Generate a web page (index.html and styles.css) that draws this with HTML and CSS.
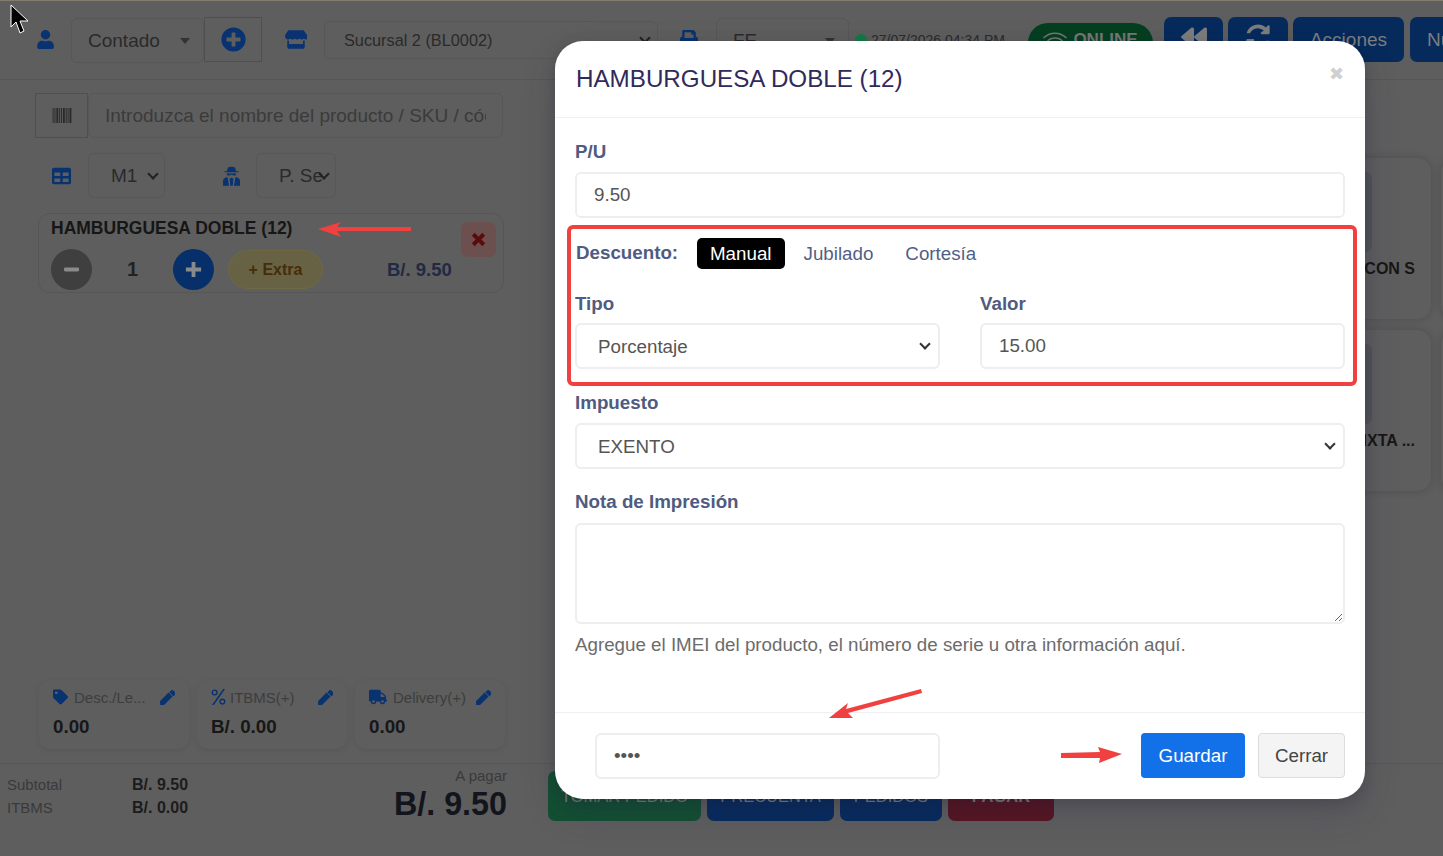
FILE: index.html
```html
<!DOCTYPE html>
<html lang="en">
<head>
    <meta charset="UTF-8">
    <meta name="viewport" content="width=device-width, initial-scale=1.0">
    <title>POS</title>
    <link rel="stylesheet" href="styles.css">
</head>
<body>

<div class="pos">
    <header class="topbar">
        <svg class="ico ico-user" viewBox="0 0 448 512"><path d="M224 256a128 128 0 1 0 0-256 128 128 0 0 0 0 256zm90 32h-17a174 174 0 0 1-146 0h-17A134 134 0 0 0 0 422v42a48 48 0 0 0 48 48h352a48 48 0 0 0 48-48v-42a134 134 0 0 0-134-134z"/></svg>
        <div class="sel sel-contado">Contado<span class="caret"></span></div>
        <div class="addbtn"><svg viewBox="0 0 512 512"><path d="M256 8a248 248 0 1 0 0 496 248 248 0 0 0 0-496zm144 276a12 12 0 0 1-12 12h-92v92a12 12 0 0 1-12 12h-56a12 12 0 0 1-12-12v-92h-92a12 12 0 0 1-12-12v-56a12 12 0 0 1 12-12h92v-92a12 12 0 0 1 12-12h56a12 12 0 0 1 12 12v92h92a12 12 0 0 1 12 12z"/></svg></div>
        <svg class="ico ico-store" viewBox="0 0 616 512"><path d="M602 118 538 16a32 32 0 0 0-27-16H105a32 32 0 0 0-27 16L14 118c-33 53-4 127 58 135a86 86 0 0 0 76-27 86 86 0 0 0 128 0 86 86 0 0 0 64 29 86 86 0 0 0 64-29 86 86 0 0 0 128 0 86 86 0 0 0 76 27c62-8 91-82 58-135zM530 288a118 118 0 0 1-26-4v100H112V284a118 118 0 0 1-26 4 120 120 0 0 1-22-2v178a48 48 0 0 0 48 48h392a48 48 0 0 0 48-48V286a120 120 0 0 1-22 2z"/></svg>
        <div class="sel sel-sucursal">Sucursal 2 (BL0002)<span class="chev"></span></div>
        <svg class="ico ico-print" viewBox="0 0 512 512"><path d="M448 192V77a32 32 0 0 0-9-22L393 9a32 32 0 0 0-23-9H96a32 32 0 0 0-32 32v160a64 64 0 0 0-64 64v112a16 16 0 0 0 16 16h48v96a32 32 0 0 0 32 32h320a32 32 0 0 0 32-32v-96h48a16 16 0 0 0 16-16V256a64 64 0 0 0-64-64zM384 448H128v-96h256zm0-224H128V64h192v48a16 16 0 0 0 16 16h48z"/></svg>
        <div class="sel sel-fe">FE<span class="caret"></span></div>
        <div class="clock"><span class="clock-dot"></span>27/07/2026 04:34 PM</div>
        <div class="online">
            <svg viewBox="0 0 640 512"><path d="M320 96C206 96 102 142 26 216l-26-28C84 106 197 56 320 56s236 50 320 132l-26 28C538 142 434 96 320 96zm0 128c-71 0-135 28-183 74l-28-28c55-54 130-86 211-86s156 32 211 86l-28 28c-48-46-112-74-183-74z"/></svg>
            ONLINE
        </div>
        <button class="navbtn nav-back"><svg viewBox="0 0 512 512"><path d="M11 276l192 160c21 17 53 3 53-25V101c0-28-32-42-53-25L11 236a26 26 0 0 0 0 40zm256 0l192 160c21 17 53 3 53-25V101c0-28-32-42-53-25L267 236a26 26 0 0 0 0 40z"/></svg></button>
        <button class="navbtn nav-sync"><svg viewBox="0 0 512 512"><path d="M370 133a168 168 0 0 0-270 47H33C56 79 147 8 256 8c60 0 114 23 155 60l34-34c15-15 41-4 41 17v127a24 24 0 0 1-24 24H335c-21 0-32-26-17-41zM33 296h127c21 0 32 26 17 41l-35 42a168 168 0 0 0 270-47h67c-23 101-114 172-223 172-60 0-114-23-155-60l-34 34c-15 15-41 4-41-17V320a24 24 0 0 1 24-24z"/></svg></button>
        <button class="navbtn nav-acciones">Acciones</button>
        <button class="navbtn nav-nuevo">Nuevo</button>
    </header>

    <div class="main">
        <section class="orderside">
            <div class="search-row">
                <div class="barcode">
                    <svg viewBox="0 0 20 16"><path d="M0 0h1v16H0zM2 0h1v16H2zM4 0h2v16H4zM7 0h1v16H7zM9 0h1v16H9zM11 0h2v16h-2zM14 0h1v16h-1zM16 0h1v16h-1zM18 0h2v16h-2z"/></svg>
                </div>
                <div class="search-input"><span>Introduzca el nombre del producto / SKU / código</span></div>
            </div>

            <div class="mesa-row">
                <svg class="ico ico-table" viewBox="0 0 512 512"><path d="M464 32H48A48 48 0 0 0 0 80v352a48 48 0 0 0 48 48h416a48 48 0 0 0 48-48V80a48 48 0 0 0-48-48zM224 416H64v-96h160zm0-160H64v-96h160zm224 160H288v-96h160zm0-160H288v-96h160z"/></svg>
                <div class="sel sel-mesa">M1<span class="chev"></span></div>
                <svg class="ico ico-spy" viewBox="0 0 448 512"><path d="M130 30Q224-10 318 30L345 130H410V160H38V130H103Z"/><path d="M100 190H348V215Q348 245 300 245 260 245 250 220H198Q188 245 148 245 100 245 100 215Z"/><path d="M0 512V400Q0 320 90 290H120L160 512ZM448 512V400Q448 320 358 290H328L288 512ZM190 512 175 320 224 300 273 320 258 512Z"/></svg>
                <div class="sel sel-servicio"><span class="sel-clip">P. Servicio</span><span class="chev"></span></div>
            </div>

            <div class="item-card">
                <div class="item-name">HAMBURGUESA DOBLE (12)</div>
                <div class="item-row">
                    <span class="round round-minus"><svg viewBox="0 0 20 20"><rect x="2" y="8" width="16" height="4" rx="1.5"/></svg></span>
                    <span class="qty">1</span>
                    <span class="round round-plus"><svg viewBox="0 0 20 20"><path d="M8 2h4v6h6v4h-6v6H8v-6H2V8h6z"/></svg></span>
                    <span class="extra">+ Extra</span>
                    <span class="item-price">B/. 9.50</span>
                </div>
                <span class="item-del"><svg viewBox="0 0 20 20"><path d="M3 6l3-3 4 4 4-4 3 3-4 4 4 4-3 3-4-4-4 4-3-3 4-4z"/></svg></span>
            </div>

            <div class="stats">
                <div class="stat">
                    <div class="stat-top">
                        <svg class="stat-ico" viewBox="0 0 512 512"><path d="M0 252V48A48 48 0 0 1 48 0h204a48 48 0 0 1 34 14l212 212a48 48 0 0 1 0 68L294 498a48 48 0 0 1-68 0L14 286a48 48 0 0 1-14-34zm112-188a48 48 0 1 0 0 96 48 48 0 0 0 0-96z"/></svg>
                        <span class="stat-label">Desc./Le...</span>
                        <svg class="stat-edit" viewBox="0 0 512 512"><path d="M291 83l138 138L130 520 7 512 0 388zM497 62L450 15a48 48 0 0 0-68 0l-64 64 138 138 41-41 23-23a48 48 0 0 0-23-91z"/></svg>
                    </div>
                    <div class="stat-val">0.00</div>
                </div>
                <div class="stat">
                    <div class="stat-top">
                        <svg class="stat-ico stat-ico-pct" viewBox="0 0 448 512"><circle cx="100" cy="110" r="76"/><circle cx="348" cy="402" r="76"/><path d="M372 0h62L76 512H14z"/></svg>
                        <span class="stat-label">ITBMS(+)</span>
                        <svg class="stat-edit" viewBox="0 0 512 512"><path d="M291 83l138 138L130 520 7 512 0 388zM497 62L450 15a48 48 0 0 0-68 0l-64 64 138 138 41-41 23-23a48 48 0 0 0-23-91z"/></svg>
                    </div>
                    <div class="stat-val">B/. 0.00</div>
                </div>
                <div class="stat">
                    <div class="stat-top">
                        <svg class="stat-ico stat-ico-wide" viewBox="0 0 640 512"><path d="M624 352h-16V244a48 48 0 0 0-14-34L494 110a48 48 0 0 0-34-14h-44V48a48 48 0 0 0-48-48H48A48 48 0 0 0 0 48v320a48 48 0 0 0 48 48h16a96 96 0 0 0 192 0h128a96 96 0 0 0 192 0h48a16 16 0 0 0 16-16v-32a16 16 0 0 0-16-16zM160 464a48 48 0 1 1 0-96 48 48 0 0 1 0 96zm320 0a48 48 0 1 1 0-96 48 48 0 0 1 0 96zm80-208H416V144h44l100 100z"/></svg>
                        <span class="stat-label">Delivery(+)</span>
                        <svg class="stat-edit" viewBox="0 0 512 512"><path d="M291 83l138 138L130 520 7 512 0 388zM497 62L450 15a48 48 0 0 0-68 0l-64 64 138 138 41-41 23-23a48 48 0 0 0-23-91z"/></svg>
                    </div>
                    <div class="stat-val">0.00</div>
                </div>
            </div>
        </section>

        <section class="products">
            <div class="product"><div class="thumb"></div><div class="product-name">HAMBURGUESA BACON S</div></div>
            <div class="product"><div class="thumb"></div><div class="product-name">HAMBURGUESA BACON S</div></div>
            <div class="product"><div class="thumb"></div><div class="product-name">HAMBURGUESA MIXTA ...</div></div>
            <div class="product"><div class="thumb"></div><div class="product-name">HAMBURGUESA MIXTA ...</div></div>
        </section>
    </div>

    <footer class="bottombar">
        <div class="totals">
            <div class="totals-row"><span class="totals-label">Subtotal</span><b>B/. 9.50</b></div>
            <div class="totals-row"><span class="totals-label">ITBMS</span><b>B/. 0.00</b></div>
        </div>
        <div class="apagar">
            <div class="apagar-label">A pagar</div>
            <div class="apagar-val">B/. 9.50</div>
        </div>
        <div class="actions">
            <button class="act act-green">TOMAR PEDIDO</button>
            <button class="act act-blue act-pre">PRECUENTA</button>
            <button class="act act-blue act-ped">PEDIDOS</button>
            <button class="act act-red">PAGAR</button>
        </div>
    </footer>
</div>

<div class="modal">
    <div class="modal-header">
        <h2>HAMBURGUESA DOBLE (12)</h2>
        <span class="modal-close">&#10006;</span>
    </div>
    <div class="modal-body">
        <label class="lbl lbl-pu">P/U</label>
        <input class="field" type="text" value="9.50">

        <div class="desc-row">
            <span class="lbl">Descuento:</span>
            <a class="pill active" href="#">Manual</a>
            <a class="pill" href="#">Jubilado</a>
            <a class="pill" href="#">Cortesía</a>
        </div>

        <div class="two-col">
            <div>
                <label class="lbl">Tipo</label>
                <div class="field field-sel">Porcentaje<span class="chev"></span></div>
            </div>
            <div>
                <label class="lbl">Valor</label>
                <input class="field" type="text" value="15.00">
            </div>
        </div>

        <label class="lbl lbl-imp">Impuesto</label>
        <div class="field field-sel">EXENTO<span class="chev"></span></div>

        <label class="lbl lbl-nota">Nota de Impresión</label>
        <textarea class="field field-area"></textarea>
        <p class="help">Agregue el IMEI del producto, el número de serie u otra información aquí.</p>
    </div>
    <div class="modal-footer">
        <input class="field pin" type="password" value="1234">
        <button class="btn-save">Guardar</button>
        <button class="btn-close">Cerrar</button>
    </div>
</div>

<!-- annotations drawn on top of the screenshot -->
<svg class="marks" viewBox="0 0 1443 856">
    <rect class="mark-box" x="569" y="227" width="786" height="157" rx="4"/>
    <polygon class="mark" points="318,229 341,222 337,227 411,227 411,231 337,231 341,237"/>
    <polygon class="mark" points="829,718 848,703 846,709 921,689 922,693 848,713 853,718"/>
    <polygon class="mark" points="1122,754 1098,747 1100,752 1061,753 1061,758 1100,758 1099,763"/>
    <path class="cursor" d="M11 5V27L16 22 20 33 24 31 20 21H28Z"/>
</svg>

</body>
</html>
```

FILE: styles.css
```css
* {
    box-sizing: border-box;
}

body {
    margin: 0;
    height: 856px;
    overflow: hidden;
    background-color: #5e5e5e;
    font-family: 'Liberation Sans', Arial, sans-serif;
    color: #1c1c1c;
}

.pos {
    height: 856px;
    display: flex;
    flex-direction: column;
    border-top: 1px solid #857c70;
}

/* top bar */
.topbar {
    height: 79px;
    flex: none;
    display: flex;
    align-items: flex-start;
    padding: 16px 0 0 37px;
    border-bottom: 1px solid #575757;
    overflow: hidden;
}

.ico {
    flex: none;
    fill: #083270;
}

.ico-user {
    width: 17px;
    height: 19px;
    margin-top: 13px;
}

.ico-store {
    width: 22px;
    height: 19px;
    margin: 13px 0 0 23px;
}

.ico-print {
    width: 18px;
    height: 20px;
    margin: 12px 0 0 22px;
}

.sel {
    position: relative;
    flex: none;
    display: flex;
    align-items: center;
    border: 1px solid #575757;
    border-radius: 6px;
    font-size: 19px;
    color: #2a2a2a;
}

.caret {
    position: absolute;
    top: 50%;
    right: 13px;
    margin-top: -3px;
    border-left: 5px solid transparent;
    border-right: 5px solid transparent;
    border-top: 6px solid #333;
}

.chev {
    position: absolute;
    top: 50%;
    right: 8px;
    width: 8px;
    height: 8px;
    margin-top: -6px;
    border-right: 2px solid #222;
    border-bottom: 2px solid #222;
    transform: rotate(45deg);
}

.sel-contado {
    width: 133px;
    height: 45px;
    margin: 1px 0 0 17px;
    padding-left: 16px;
}

.addbtn {
    flex: none;
    width: 58px;
    height: 45px;
    display: flex;
    align-items: center;
    justify-content: center;
    border: 1px solid #4f4f4f;
}

.addbtn svg {
    width: 25px;
    height: 25px;
    fill: #083270;
}

.sel-sucursal {
    width: 334px;
    height: 38px;
    margin: 4px 0 0 17px;
    padding-left: 19px;
    font-size: 16.3px;
}

.sel-fe {
    width: 133px;
    height: 45px;
    margin: 1px 0 0 18px;
    padding-left: 16px;
}

.clock {
    flex: none;
    width: 173px;
    margin: 15px 0 0 6px;
    display: flex;
    align-items: center;
    gap: 4px;
    font-size: 14px;
    color: #2a2a2a;
}

.clock-dot {
    width: 12px;
    height: 12px;
    border-radius: 50%;
    background: #127a43;
}

.online {
    flex: none;
    width: 125px;
    height: 40px;
    margin-top: 6px;
    padding-top: 7px;
    display: flex;
    align-items: flex-start;
    justify-content: center;
    gap: 6px;
    border-radius: 20px;
    background: #053f20;
    color: #777;
    font-size: 17px;
    font-weight: bold;
}

.online svg {
    width: 24px;
    height: 20px;
    fill: #777;
}

.navbtn {
    flex: none;
    height: 45px;
    padding: 0;
    border: none;
    border-radius: 7px;
    background: #062a5c;
    color: #7d7d7d;
    font-family: inherit;
    font-size: 19px;
}

.navbtn svg {
    width: 26px;
    height: 26px;
    fill: #7d7d7d;
}

.nav-back { width: 59px; margin-left: 11px; }
.nav-sync { width: 60px; margin-left: 5px; }
.nav-acciones { width: 111px; margin-left: 5px; }
.nav-nuevo { width: 70px; margin-left: 6px; text-align: left; padding-left: 17px; }

/* order column */
.main {
    flex: 1;
    min-height: 0;
    display: flex;
}

.orderside {
    flex: none;
    width: 1200px;
    display: flex;
    flex-direction: column;
    padding-top: 13px;
}

.search-row {
    display: flex;
    height: 45px;
    margin-left: 35px;
}

.barcode {
    width: 53px;
    display: flex;
    align-items: center;
    justify-content: center;
    border: 1px solid #4f4f4f;
}

.barcode svg {
    width: 20px;
    height: 15px;
    fill: #2a2a2a;
}

.search-input {
    width: 415px;
    display: flex;
    align-items: center;
    padding: 0 16px;
    border: 1px solid #575757;
    border-radius: 6px;
    font-size: 19px;
    color: #3b3b3b;
}

.search-input span {
    white-space: nowrap;
    overflow: hidden;
}

.mesa-row {
    display: flex;
    align-items: center;
    height: 45px;
    margin: 15px 0 0 52px;
}

.ico-table {
    width: 19px;
    height: 20px;
}

.ico-spy {
    width: 17px;
    height: 20px;
    margin-left: 58px;
}

.sel-mesa {
    width: 77px;
    height: 45px;
    margin-left: 17px;
    padding-left: 22px;
}

.sel-servicio {
    width: 80px;
    height: 45px;
    margin-left: 16px;
    padding-left: 22px;
}

.sel-clip {
    width: 44px;
    white-space: nowrap;
    overflow: hidden;
}

.sel-mesa .chev,
.sel-servicio .chev {
    right: 7px;
}

.item-card {
    position: relative;
    width: 466px;
    height: 80px;
    margin: 15px 0 0 38px;
    padding: 4px 0 0 12px;
    border: 1px solid #565656;
    border-radius: 12px;
}

.item-name {
    font-size: 17.5px;
    font-weight: bold;
    line-height: 21px;
    color: #161616;
}

.item-row {
    display: flex;
    align-items: center;
    margin-top: 10px;
}

.round {
    flex: none;
    width: 41px;
    height: 41px;
    display: flex;
    align-items: center;
    justify-content: center;
    border-radius: 50%;
}

.round svg {
    width: 19px;
    height: 19px;
    fill: #8a8a8a;
}

.round-minus { background: #3f3f3f; }
.round-plus { background: #07306a; }

.qty {
    width: 81px;
    text-align: center;
    font-size: 20px;
    font-weight: bold;
    color: #222;
}

.extra {
    flex: none;
    width: 95px;
    height: 39px;
    margin-left: 14px;
    display: flex;
    align-items: center;
    justify-content: center;
    border: 1px solid #6f6845;
    border-radius: 20px;
    background: #686245;
    color: #452d09;
    font-size: 16px;
    font-weight: bold;
}

.item-price {
    margin-left: 64px;
    font-size: 18.5px;
    font-weight: bold;
    color: #1f2a44;
}

.item-del {
    position: absolute;
    top: 8px;
    right: 7px;
    width: 35px;
    height: 35px;
    display: flex;
    align-items: center;
    justify-content: center;
    border-radius: 7px;
    background: #6c4f4f;
}

.item-del svg {
    width: 19px;
    height: 19px;
    fill: #5d0a0a;
}

.stats {
    display: flex;
    gap: 8px;
    margin: auto 0 14px 39px;
}

.stat {
    width: 150px;
    height: 69px;
    padding: 7px 14px;
    border-radius: 12px;
    background: #5e5e5e;
    box-shadow: 0 2px 6px rgba(0, 0, 0, 0.07);
}

.stat-top {
    display: flex;
    align-items: center;
    gap: 6px;
    height: 20px;
}

.stat-ico {
    flex: none;
    width: 15px;
    height: 16px;
    fill: #083270;
}

.stat-ico-pct {
    overflow: visible;
    margin-right: -2px;
}

.stat-ico-pct circle {
    fill: none;
    stroke: #083270;
    stroke-width: 44;
}

.stat-ico-wide {
    width: 18px;
}

.stat-label {
    flex: 1;
    font-size: 15px;
    color: #3d3d3d;
    white-space: nowrap;
}

.stat-edit {
    flex: none;
    width: 15px;
    height: 15px;
    fill: #083270;
    overflow: hidden;
}

.stat-val {
    margin-top: 9px;
    font-size: 18.75px;
    font-weight: bold;
    color: #171717;
}

/* products */
.products {
    flex: none;
    display: grid;
    grid-template-columns: 231px 231px;
    grid-auto-rows: 161px;
    gap: 11px 10px;
    padding-top: 78px;
}

.product {
    padding-top: 14px;
    border-radius: 14px;
    background: #5e5e5e;
    box-shadow: 0 0 8px rgba(0, 0, 0, 0.18);
}

.thumb {
    width: 114px;
    height: 80px;
    margin-left: 58px;
    border-radius: 6px;
    background: #515458;
}

.product-name {
    margin-top: 8px;
    padding-right: 16px;
    text-align: right;
    font-size: 16px;
    font-weight: bold;
    color: #161616;
    white-space: nowrap;
}

/* footer */
.bottombar {
    flex: none;
    height: 93px;
    display: flex;
    border-top: 1px solid #575757;
}

.totals {
    width: 200px;
    padding: 9px 0 0 7px;
}

.totals-row {
    display: flex;
    height: 23px;
    align-items: center;
    font-size: 16px;
}

.totals-label {
    width: 125px;
    font-size: 15px;
    color: #3a3a3a;
}

.apagar {
    width: 307px;
    padding-top: 3px;
    text-align: right;
}

.apagar-label {
    font-size: 15px;
    color: #3a3a3a;
}

.apagar-val {
    margin-top: 2px;
    font-size: 32.3px;
    font-weight: bold;
    color: #12151c;
}

.actions {
    display: flex;
    gap: 6px;
    height: 50px;
    margin: 7px 0 0 41px;
}

.act {
    height: 50px;
    padding: 0;
    border: none;
    border-radius: 7px;
    color: #7d7d7d;
    font-family: inherit;
    font-size: 16.5px;
}

.act-green { width: 153px; background: #124f31; }
.act-blue { background: #062a5c; }
.act-pre { width: 127px; }
.act-ped { width: 102px; }
.act-red { width: 106px; background: #56141f; font-weight: bold; }

/* modal */
.modal {
    position: absolute;
    top: 41px;
    left: 555px;
    width: 810px;
    height: 758px;
    display: flex;
    flex-direction: column;
    border-radius: 28px;
    background: #fff;
    box-shadow: 0 15px 35px rgba(50, 50, 93, 0.2), 0 5px 15px rgba(0, 0, 0, 0.17);
}

.modal-header {
    position: relative;
    height: 77px;
    flex: none;
    padding: 23px 20px 0 21px;
    border-bottom: 1px solid #f0f0f0;
}

.modal-header h2 {
    margin: 0;
    font-size: 24.2px;
    font-weight: normal;
    line-height: 30px;
    color: #2f2a59;
}

.modal-close {
    position: absolute;
    top: 22px;
    right: 21px;
    font-size: 18px;
    color: #d0d0d0;
}

.modal-body {
    flex: 1;
    padding: 0 20px;
}

.lbl {
    display: block;
    font-size: 18.75px;
    font-weight: bold;
    line-height: 22px;
    color: #4f5b80;
}

.lbl-pu { margin-top: 23px; }
.lbl-imp { margin-top: 23px; }
.lbl-nota { margin-top: 22px; }

.field {
    display: block;
    width: 100%;
    height: 46px;
    padding: 0 17px;
    border: 2px solid #eeeeee;
    border-radius: 6px;
    background: #fff;
    font-family: inherit;
    font-size: 18.75px;
    color: #555;
    outline: none;
}

.lbl-pu + .field,
.lbl-imp + .field {
    margin-top: 9px;
}

.two-col .lbl + .field {
    margin-top: 8px;
}

.lbl-nota + .field {
    margin-top: 10px;
}

.field-sel {
    position: relative;
    display: flex;
    align-items: center;
    padding: 2px 0 0 21px;
}

.field-sel .chev {
    right: 9px;
    width: 8px;
    height: 8px;
    border-color: #333;
}

.field-area {
    height: 101px;
    padding: 8px 17px;
    resize: vertical;
}

.desc-row {
    display: flex;
    align-items: center;
    height: 31px;
    margin-top: 20px;
}

.desc-row .lbl {
    width: 122px;
    padding: 0 0 2px 1px;
}

.pill {
    height: 31px;
    display: flex;
    align-items: center;
    padding: 0 13px;
    margin-right: 6px;
    border-radius: 5px;
    font-size: 18.75px;
    color: #525f85;
    text-decoration: none;
}

.pill.active {
    background: #000;
    color: #fff;
}

.two-col {
    display: grid;
    grid-template-columns: 365px 365px;
    gap: 40px;
    margin-top: 24px;
}

.help {
    margin: 10px 0 0;
    font-size: 18.75px;
    color: #6c6c6c;
}

.modal-footer {
    flex: none;
    height: 87px;
    display: flex;
    align-items: flex-start;
    padding: 20px 20px 0 40px;
    border-top: 1px solid #f0f0f0;
}

.pin {
    width: 345px;
}

.btn-save,
.btn-close {
    height: 45px;
    padding: 0;
    border-radius: 4px;
    font-family: inherit;
    font-size: 18.75px;
}

.btn-save {
    width: 104px;
    margin-left: 201px;
    border: none;
    background: #1271e8;
    color: #fff;
}

.btn-close {
    width: 87px;
    margin-left: 13px;
    border: 1px solid #dcdcdc;
    background: #f4f4f4;
    color: #444;
}

/* screenshot annotations */
.marks {
    position: absolute;
    top: 0;
    left: 0;
    width: 1443px;
    height: 856px;
    pointer-events: none;
}

.mark {
    fill: #f04040;
}

.mark-box {
    fill: none;
    stroke: #f04040;
    stroke-width: 4;
}

.cursor {
    fill: #000;
    stroke: #fff;
    stroke-width: 1;
}
```
